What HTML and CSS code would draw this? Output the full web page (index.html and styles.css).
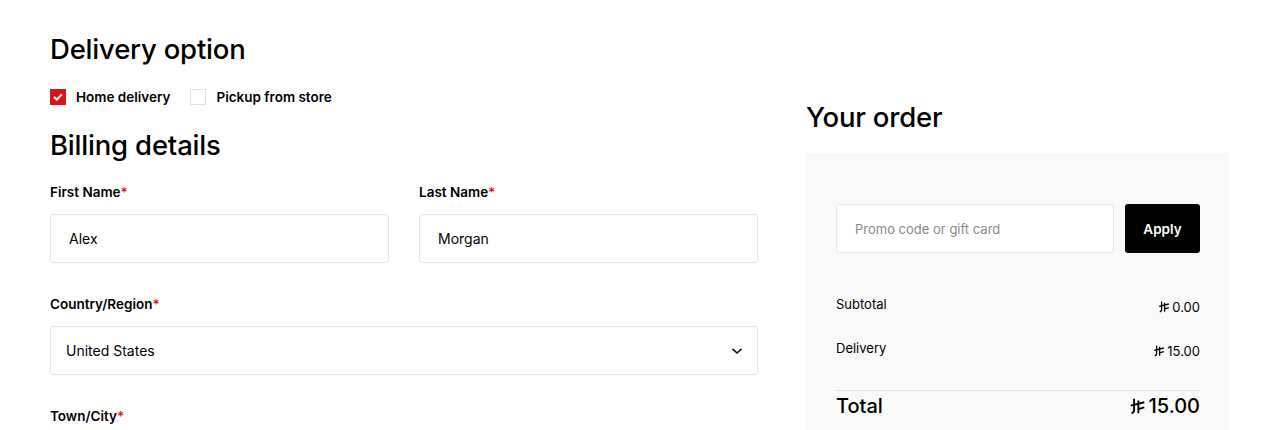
FILE: index.html
```html
<!DOCTYPE html>
<html lang="en">

<head>
    <meta charset="UTF-8">
    <meta name="viewport" content="width=device-width, initial-scale=1.0">
    <title>Checkout</title>
    <link rel="stylesheet" href="styles.css">
</head>

<body>
    <div class="checkout">

        <!-- Left column -->
        <div class="billing">
            <h2 class="title">Delivery option</h2>
            <div class="options">
                <label class="option">
                    <span class="box checked">
                        <svg width="10" height="8" viewBox="0 0 10 8"><path d="M1 4 L3.8 6.6 L9 1.2" fill="none" stroke="#fff" stroke-width="2"/></svg>
                    </span>
                    Home delivery
                </label>
                <label class="option">
                    <span class="box"></span>
                    Pickup from store
                </label>
            </div>

            <h2 class="title">Billing details</h2>
            <div class="row">
                <div class="field">
                    <label class="label">First Name<span class="req">*</span></label>
                    <div class="input">Alex</div>
                </div>
                <div class="field">
                    <label class="label">Last Name<span class="req">*</span></label>
                    <div class="input">Morgan</div>
                </div>
            </div>
            <div class="field">
                <label class="label">Country/Region<span class="req">*</span></label>
                <div class="input select">
                    United States
                    <svg width="12" height="8" viewBox="0 0 12 8"><path d="M1.5 1.8 L6 6 L10.5 1.8" fill="none" stroke="#111" stroke-width="1.6"/></svg>
                </div>
            </div>
            <div class="field">
                <label class="label">Town/City<span class="req">*</span></label>
            </div>
        </div>

        <!-- Right column -->
        <div class="order">
            <h2 class="title">Your order</h2>
            <div class="panel">
                <div class="promo">
                    <div class="input promo-input">Promo code or gift card</div>
                    <button class="apply">Apply</button>
                </div>
                <div class="line">
                    <span>Subtotal</span>
                    <span class="price"><svg class="riyal" viewBox="0 0 20 20"><path d="M6 1 V14 Q6 17 3 18 M11 3 V18 M2 9 L18 5 M11 13 L18 11" fill="none" stroke="currentColor" stroke-width="2.2"/></svg>0.00</span>
                </div>
                <div class="line">
                    <span>Delivery</span>
                    <span class="price"><svg class="riyal" viewBox="0 0 20 20"><path d="M6 1 V14 Q6 17 3 18 M11 3 V18 M2 9 L18 5 M11 13 L18 11" fill="none" stroke="currentColor" stroke-width="2.2"/></svg>15.00</span>
                </div>
                <div class="line total">
                    <span>Total</span>
                    <span class="price"><svg class="riyal" viewBox="0 0 20 20"><path d="M6 1 V14 Q6 17 3 18 M11 3 V18 M2 9 L18 5 M11 13 L18 11" fill="none" stroke="currentColor" stroke-width="2.2"/></svg>15.00</span>
                </div>
            </div>
        </div>

    </div>
</body>

</html>
```

FILE: styles.css
```css
/* General Reset */
body {
    margin: 0;
    font-family: Inter, "Noto Sans", sans-serif;
    background: #fff;
    color: #000;
}

/* Page layout */
.checkout {
    display: flex;
    gap: 48px;
    padding: 0 51px 0 50px;
}

.billing {
    width: 708px;
}

.order {
    flex-grow: 1;
    padding-top: 100px;
}

.title {
    font-size: 27.5px;
    font-weight: 500;
    margin: 0;
    letter-spacing: -0.2px;
}

.billing .title:first-child {
    padding-top: 32px;
}

/* Delivery options */
.options {
    display: flex;
    gap: 20px;
    margin: 23px 0 23px;
}

.option {
    display: flex;
    align-items: center;
    gap: 10px;
    font-size: 13.5px;
    font-weight: 600;
}

.box {
    width: 14px;
    height: 14px;
    border: 1px solid #e2e2e2;
    display: flex;
    align-items: center;
    justify-content: center;
}

.box.checked {
    background: #d7141a;
    border-color: #d7141a;
}

/* Form fields */
.row {
    display: flex;
    gap: 30px;
    margin-top: 22px;
}

.row .field {
    flex: 1;
    margin-top: 0;
}

.field {
    margin-top: 33px;
}

.label {
    display: block;
    font-size: 13.5px;
    font-weight: 600;
    margin-bottom: 14px;
}

.req {
    color: #e0101a;
}

.input {
    height: 47px;
    border: 1px solid #e6e6e6;
    border-radius: 3px;
    display: flex;
    align-items: center;
    padding: 0 18px;
    font-size: 14px;
    background: #fff;
}

.select {
    justify-content: space-between;
    padding: 0 14px 0 15px;
}

/* Order panel */
.panel {
    background: #f9f9f9;
    margin-top: 19px;
    padding: 51px 29px 16px 30px;
}

.promo {
    display: flex;
    gap: 11px;
}

.promo-input {
    flex-grow: 1;
    color: #8a8a8a;
    font-size: 13px;
}

.apply {
    width: 75px;
    height: 49px;
    background: #000;
    color: #fff;
    border: none;
    border-radius: 3px;
    font-family: inherit;
    font-size: 13.5px;
    font-weight: 600;
}

.line {
    display: flex;
    justify-content: space-between;
    font-size: 13px;
    margin-top: 43px;
}

.line + .line {
    margin-top: 25px;
}

.price {
    display: flex;
    align-items: center;
    gap: 2px;
    padding-top: 3px;
}

.riyal {
    width: 12px;
    height: 12px;
}

.total {
    border-top: 1px solid #e2e2e2;
    padding-top: 3px;
    font-size: 20px;
    font-weight: 500;
}

.line.total {
    margin-top: 31px;
}

.total .price {
    padding-top: 0;
}

.total .riyal {
    width: 17px;
    height: 17px;
}
```
